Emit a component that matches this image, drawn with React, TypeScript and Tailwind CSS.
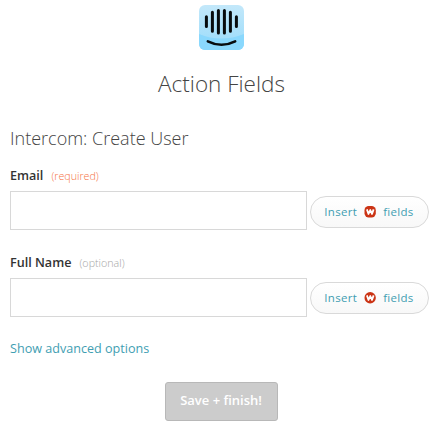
function IntercomLogo() {
  return (
    <svg width="46" height="46" viewBox="0 0 46 46" className="block">
      <defs>
        <linearGradient id="sky" x1="0" y1="0" x2="0" y2="1">
          <stop offset="0" stopColor="#c3e8fa" />
          <stop offset="1" stopColor="#98dbfb" />
        </linearGradient>
        <clipPath id="tile">
          <rect x="0" y="0" width="45" height="45" rx="6" />
        </clipPath>
      </defs>
      <g clipPath="url(#tile)">
        <rect width="45" height="45" fill="url(#sky)" />
        <path d="M0 29Q22 38 45 29V45H0Z" fill="#8ad8fd" />
      </g>
      <g stroke="#080c0e" strokeWidth="3" strokeLinecap="round" fill="none">
        <path d="M7.4 11.7V21.5M13.4 7.3V26.2M19.4 5.5V28.1M25.4 5.5V28.1M31.4 7.3V26.2M37.4 11.7V21.5" />
        <path d="M8.8 36.3Q22.5 43.2 36.2 36.3" strokeWidth="2.5" />
      </g>
    </svg>
  );
}

function WebhookMark({ round }: { round?: boolean }) {
  return (
    <svg width="12" height="12" viewBox="0 0 12 12" className="mx-[7px] shrink-0">
      <rect x="0.5" y="0.1" width="11.3" height="11.4" rx={round ? 5.6 : 4.2} fill="#cb3415" />
      <path d="M2.9 3.4L4.5 8L6.3 4L8 8L9.6 3.4" fill="none" stroke="#fff" strokeWidth="1.8" strokeLinejoin="round" />
    </svg>
  );
}

type FieldProps = { label: string; note: string; noteColor: string; round?: boolean };

function Field({ label, note, noteColor, round }: FieldProps) {
  return (
    <div>
      <div className="flex h-5 items-center">
        <span className="text-[12.6px] font-semibold text-[#333]">{label}</span>
        <span className={"ml-2 text-[10.7px] font-light " + noteColor}>{note}</span>
      </div>
      <div className="mt-[5px] flex items-center">
        <input aria-label={label} className="h-[39px] w-[297px] border border-[#d8d8d8] bg-white px-2 outline-none" />
        <button
          className={
            "ml-[3px] flex h-8 w-[119px] items-center justify-center rounded-full border border-[#d9d9d9] bg-linear-to-b from-white to-[#f8f8f8] pr-px text-[11.5px] tracking-[0.3px] text-[#3f9eb2] " +
            (round ? "" : "mt-0.5")
          }
        >
          Insert <WebhookMark round={round} /> fields
        </button>
      </div>
    </div>
  );
}

export default function App() {
  return (
    <main className="h-[433px] w-[436px] overflow-hidden bg-white pl-[10px] pt-[5px] font-['Open_Sans',sans-serif]">
      <div className="pl-[189px]">
        <IntercomLogo />
      </div>
      <h1 className="mt-[17px] w-[423px] text-center text-[22.5px] leading-8 font-light text-[#444]">Action Fields</h1>
      <h2 className="mt-[26px] text-[18px] leading-6 font-light text-[#444]">Intercom: Create User</h2>
      <div className="mt-4 flex flex-col gap-[23px]">
        <Field label="Email" note="(required)" noteColor="text-[#f5733f]" />
        <Field label="Full Name" note="(optional)" noteColor="text-[#a5a5a5]" round />
      </div>
      <a className="mt-[22px] block text-[12.6px] leading-5 text-[#3f9eb2]">Show advanced options</a>
      <button className="ml-[155px] mt-[23px] h-[39px] w-[113px] rounded-[3px] border border-[#b8b8b8] bg-[#ccc] pr-px pb-0.5 text-[13px] font-semibold text-white">
        Save + finish!
      </button>
    </main>
  );
}
